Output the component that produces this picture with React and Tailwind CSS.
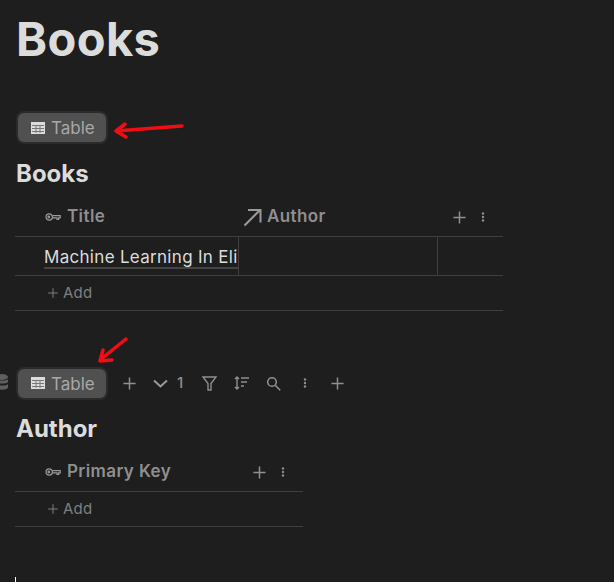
import React from 'react'

const font = { fontFamily: 'Inter' }

function GridIcon() {
  return (
    <svg width="14" height="12" viewBox="0 0 14 12" className="shrink-0">
      <path fill="#dcdcdc" d="M0 0h14v12H0z" />
      <path fill="#777777" d="M1 3h12v1H1zM1 6h12v1H1zM1 9h12v1H1zM4.500 3h1v8h-1zM8.500 3h1v8h-1z" />
    </svg>
  )
}

function Plus({ size = 16, color = '#8f8f8f', width = 1.6 }) {
  return (
    <svg width={size} height={size} viewBox="0 0 16 16" className="shrink-0">
      <path d="M8 1.500v13M1.500 8h13" stroke={color} strokeWidth={width} fill="none" />
    </svg>
  )
}

function Dots() {
  return (
    <svg width="4" height="10" viewBox="0 0 4 10" className="shrink-0">
      <circle cx="2" cy="1.500" r="1.200" fill="#8f8f8f" />
      <circle cx="2" cy="5" r="1.200" fill="#8f8f8f" />
      <circle cx="2" cy="8.500" r="1.200" fill="#8f8f8f" />
    </svg>
  )
}

function KeyIcon() {
  return (
    <svg width="16" height="10" viewBox="0 0 16 10" className="shrink-0" fill="none" stroke="#9a9a9a" strokeWidth="1.200">
      <circle cx="4.200" cy="5" r="3.200" />
      <circle cx="3.800" cy="5" r="0.800" />
      <path d="M7.400 3.600h7.800v2.200h-1.600v1.600h-1.600V5.800H7.400" />
    </svg>
  )
}

function TableTab() {
  return (
    <div className="box-border flex h-[33px] w-[92px] shrink-0 items-center rounded-lg border-2 border-[#2b2b2b] bg-[#505050] pl-[13px]">
      <GridIcon />
      <span className="ml-[6px] pt-[3px] text-[17px] text-[#a8a8a8]">Table</span>
    </div>
  )
}

function AddRow() {
  return (
    <div className="flex h-[35px] w-full items-center border-b border-[#3f3f3f] pl-[32px]">
      <Plus size={12} color="#7f7f7f" width={1.3} />
      <span className="ml-[4px] text-[15px] tracking-[0.2px] text-[#7f7f7f]">Add</span>
    </div>
  )
}

export default function App() {
  return (
    <div className="h-[582px] w-[614px] overflow-hidden bg-[#1e1e1e] pl-[16px]" style={font}>
      <h1 className="h-[62px] pt-[9px] text-[47px] leading-[60px] font-bold tracking-[0.4px] text-[#dcdcdc]">Books</h1>

      {/* first view */}
      <div className="mt-[49px]">
        <TableTab />
      </div>
      <h2 className="mt-[16px] h-[28px] text-[24px] leading-[28px] font-bold text-[#dcdcdc]">Books</h2>

      <div className="-ml-px mt-[10px] w-[488px]">
        <div className="flex h-[39px] items-center border-b border-[#3f3f3f]">
          <div className="flex w-[223px] items-center pl-[30px]">
            <KeyIcon />
            <span className="ml-[6px] text-[17px] font-semibold tracking-[0.4px] text-[#8f8f8f]">Title</span>
          </div>
          <div className="flex w-[200px] items-center pl-[5px]">
            <svg width="19" height="19" viewBox="0 0 19 19" fill="none" stroke="#9a9a9a" strokeWidth="2" className="shrink-0">
              <path d="M1.500 17.500 17 2M5 2h12.500v12.500" />
            </svg>
            <span className="ml-[5px] text-[17px] font-semibold tracking-[0.4px] text-[#8f8f8f]">Author</span>
          </div>
          <div className="flex items-center pl-[14px]">
            <Plus size={15} />
            <span className="ml-[14px] flex"><Dots /></span>
          </div>
        </div>
        <div className="flex h-[39px] border-b border-[#3f3f3f]">
          <div className="w-[223px] overflow-hidden pl-[29px] pt-[10px]">
            <div className="w-[300px] border-b-2 border-[#444444] text-[17px] leading-[20px] tracking-[0.3px] whitespace-nowrap text-[#dcdcdc]">
              Machine Learning In Elixir
            </div>
          </div>
          <div className="w-[200px] border-x border-[#3f3f3f]" />
        </div>
        <AddRow />
      </div>

      {/* second view */}
      <div className="relative mt-[55px] flex h-[34px] items-center">
        <svg width="12" height="17" viewBox="0 0 12 17" className="absolute left-[-20px] top-[8px]" fill="#5f5f5f">
          <ellipse cx="6" cy="3" rx="6" ry="3" />
          <path d="M0 5c1 2 11 2 12 0v3c-1 2-11 2-12 0zM0 10c1 2 11 2 12 0v3.500c-1 3-11 3-12 0z" />
        </svg>
        <TableTab />
        <span className="ml-[5px] flex w-[32px] justify-center"><Plus size={15} /></span>
        <div className="flex w-[48px] items-center pl-[8px]">
          <svg width="15" height="9" viewBox="0 0 15 9" fill="none" stroke="#9a9a9a" strokeWidth="2">
            <path d="M1 1.500 7.500 7.500 14 1.500" />
          </svg>
          <span className="ml-[9px] text-[15px] font-medium text-[#8f8f8f]">1</span>
        </div>
        <span className="flex w-[32px] justify-center">
          <svg width="15" height="15" viewBox="0 0 15 15" fill="none" stroke="#8f8f8f" strokeWidth="1.400">
            <path d="M1 1h13L9 7.500V14H6V7.500z" />
          </svg>
        </span>
        <span className="flex w-[32px] justify-center">
          <svg width="15" height="14" viewBox="0 0 15 14" fill="none" stroke="#8f8f8f" strokeWidth="1.400">
            <path d="M3 1v12M1 3l2-2 2 2M1 11l2 2 2-2M7 2h8M7 6h6M7 10h3" />
          </svg>
        </span>
        <span className="flex w-[32px] justify-center">
          <svg width="15" height="15" viewBox="0 0 15 15" fill="none" stroke="#8f8f8f" strokeWidth="1.600">
            <circle cx="6" cy="6" r="4.300" />
            <path d="m9.200 9.200 5 5" />
          </svg>
        </span>
        <span className="flex w-[32px] justify-center"><Dots /></span>
        <span className="flex w-[32px] justify-center"><Plus size={15} /></span>
      </div>
      <h2 className="mt-[15px] h-[28px] text-[24px] leading-[28px] font-bold text-[#dcdcdc]">Author</h2>

      <div className="-ml-px mt-[10px] w-[288px]">
        <div className="flex h-[39px] items-center border-b border-[#3f3f3f] pl-[30px]">
          <KeyIcon />
          <span className="ml-[6px] w-[110px] text-[17px] font-semibold tracking-[0.4px] whitespace-nowrap text-[#8f8f8f]">Primary Key</span>
          <span className="ml-[75px] flex"><Plus size={15} /></span>
          <span className="ml-[14px] flex"><Dots /></span>
        </div>
        <AddRow />
      </div>

      <div className="-ml-px mt-[50px] h-[5px] w-px bg-white" />

      {/* red annotation arrows */}
      <svg width="614" height="582" viewBox="0 0 614 582" className="pointer-events-none absolute left-0 top-0" fill="none" stroke="#f20d12" strokeWidth="3.500" strokeLinecap="round" strokeLinejoin="round">
        <path d="M182 126 116 131M125 124l-9 7 10 6" />
        <path d="M126 339 100 360M103 350l-3 11 12-1" />
      </svg>
    </div>
  )
}
